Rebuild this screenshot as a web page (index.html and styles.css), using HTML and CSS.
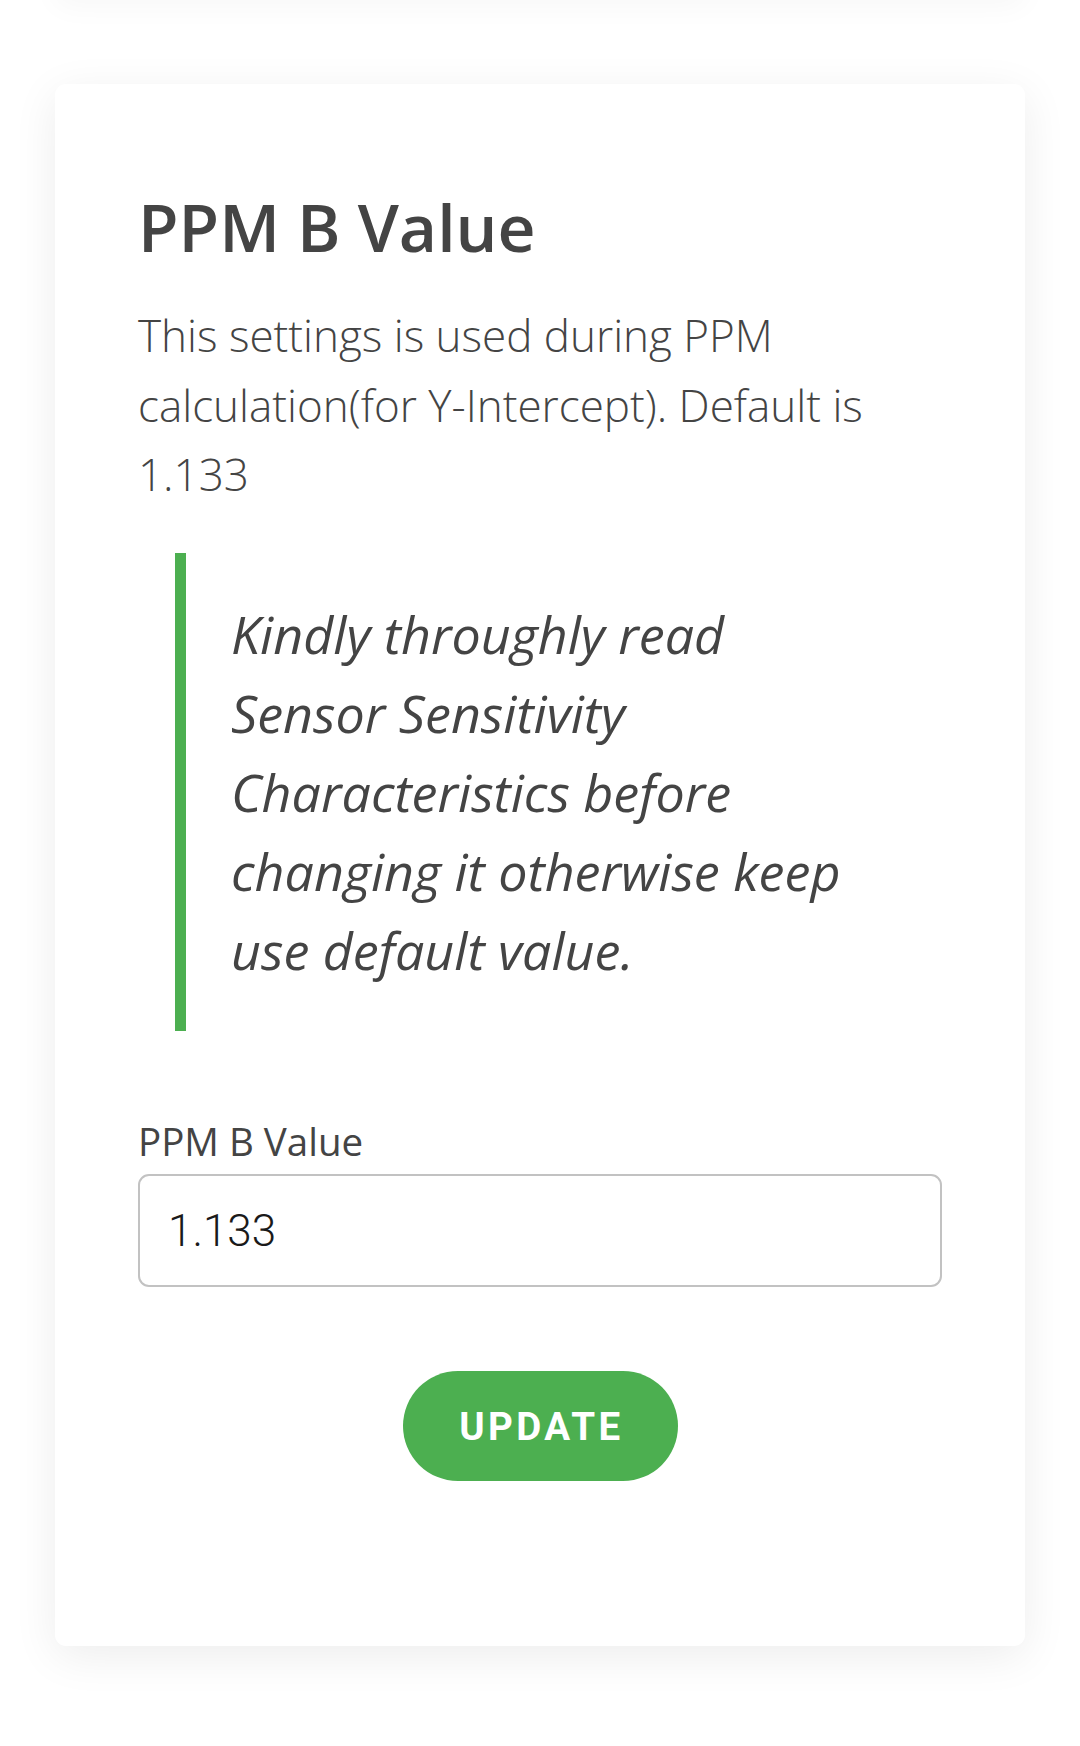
FILE: index.html
```html
<!DOCTYPE html>
<html lang="en">
<head>
<meta charset="utf-8">
<title>PPM B Value</title>
<link rel="stylesheet" href="styles.css">
</head>
<body>
<div class="page">
  <div class="card card-stub"></div>
  <section class="card">
    <h2 class="card-title">PPM B Value</h2>
    <p class="card-desc">This settings is used during PPM calculation(for Y-Intercept). Default is 1.133</p>
    <blockquote class="note">Kindly throughly read Sensor Sensitivity Characteristics before changing it otherwise keep use default value.</blockquote>
    <form class="form">
      <label class="field-label" for="ppmb">PPM B Value</label>
      <input class="field-input" id="ppmb" type="text" value="1.133">
      <div class="actions">
        <button class="btn" type="button">UPDATE</button>
      </div>
    </form>
  </section>
</div>
</body>
</html>
```

FILE: styles.css
```css
* { box-sizing: border-box; }

html, body {
  margin: 0;
  padding: 0;
  background: #ffffff;
}

body {
  font-family: "Open Sans", "Liberation Sans", sans-serif;
  color: #444444;
}

.page {
  padding: 0 55px 100px;
  display: flex;
  flex-direction: column;
  gap: 84px;
}

.card {
  background: #ffffff;
  border-radius: 11px;
  box-shadow: 0 10px 45px rgba(0, 0, 0, 0.075);
  padding: 83px;
}

.card-stub {
  height: 200px;
  margin-top: -200px;
  padding: 0;
  box-shadow: 0 6px 30px rgba(0, 0, 0, 0.035);
}

.card-title {
  margin: 20px 0 0;
  font-size: 66px;
  line-height: 79px;
  font-weight: 600;
  color: #444444;
}

.card-desc {
  margin: 35px 0 0;
  font-size: 44px;
  line-height: 69.5px;
  font-weight: 300;
  color: #444444;
}

.note {
  margin: 43px 37px 0;
  border-left: 11px solid #4caf50;
  padding: 41px 40px 41px 45px;
  font-size: 52px;
  line-height: 79.2px;
  font-style: italic;
  font-weight: 400;
  color: #444444;
}

.form {
  margin-top: 82px;
  display: flex;
  flex-direction: column;
}

.field-label {
  font-size: 38.5px;
  line-height: 57.75px;
  font-weight: 400;
  color: #444444;
}

.field-input {
  margin-top: 4px;
  height: 113px;
  width: 100%;
  border: 2px solid #c2c2c2;
  border-radius: 11px;
  padding: 0 28px;
  font-family: Roboto, "Liberation Sans", sans-serif;
  font-size: 44px;
  font-weight: 300;
  color: #1a1a1a;
  background: #ffffff;
  outline: none;
}

.actions {
  margin: 84px 0 82px;
  display: flex;
  justify-content: center;
}

.btn {
  width: 275px;
  height: 110px;
  border: none;
  border-radius: 55px;
  background: #4caf50;
  color: #ffffff;
  font-family: Roboto, "Liberation Sans", sans-serif;
  font-size: 38.5px;
  font-weight: 700;
  letter-spacing: 3.4px;
  padding: 0 0 0 3px;
  cursor: pointer;
}
```
